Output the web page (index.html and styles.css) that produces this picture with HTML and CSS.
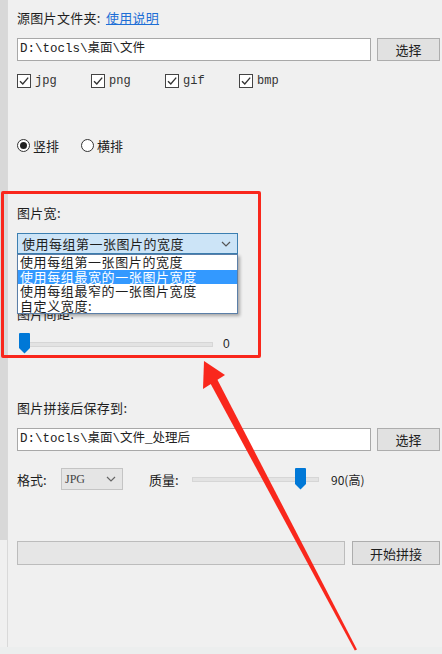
FILE: index.html
```html
<!DOCTYPE html>
<html lang="zh-CN">
<head>
    <meta charset="UTF-8">
    <title>图片拼接</title>
    <link rel="stylesheet" href="styles.css">
</head>
<body>
    <div class="window">
        <div class="scrollbar"><div class="scroll-thumb"></div></div>

        <div class="panel">
            <div class="label">源图片文件夹: <a href="#" class="link">使用说明</a></div>
            <div class="path-row">
                <div class="textbox">D:\tocls\桌面\文件</div>
                <button class="btn btn-select">选择</button>
            </div>

            <div class="check-row">
                <label class="check"><span class="box"><svg width="12" height="12" viewBox="0 0 12 12"><path d="M2 6.2 L4.8 9 L10.2 2.6" fill="none" stroke="#333" stroke-width="1.4"/></svg></span>jpg</label>
                <label class="check"><span class="box"><svg width="12" height="12" viewBox="0 0 12 12"><path d="M2 6.2 L4.8 9 L10.2 2.6" fill="none" stroke="#333" stroke-width="1.4"/></svg></span>png</label>
                <label class="check"><span class="box"><svg width="12" height="12" viewBox="0 0 12 12"><path d="M2 6.2 L4.8 9 L10.2 2.6" fill="none" stroke="#333" stroke-width="1.4"/></svg></span>gif</label>
                <label class="check"><span class="box"><svg width="12" height="12" viewBox="0 0 12 12"><path d="M2 6.2 L4.8 9 L10.2 2.6" fill="none" stroke="#333" stroke-width="1.4"/></svg></span>bmp</label>
            </div>

            <div class="radio-row">
                <label class="radio"><span class="dot on"></span>竖排</label>
                <label class="radio"><span class="dot"></span>横排</label>
            </div>

            <div class="label label-width">图片宽:</div>
            <div class="combo">
                <div class="combo-box">
                    <span>使用每组第一张图片的宽度</span>
                    <svg class="chevron" width="10" height="6" viewBox="0 0 10 6"><path d="M1 1 L5 5 L9 1" fill="none" stroke="#555" stroke-width="1.2"/></svg>
                </div>
                <ul class="combo-list">
                    <li>使用每组第一张图片的宽度</li>
                    <li class="selected">使用每组最宽的一张图片宽度</li>
                    <li>使用每组最窄的一张图片宽度</li>
                    <li>自定义宽度:</li>
                </ul>
            </div>

            <div class="label label-gap">图片间距:</div>
            <div class="slider-row">
                <div class="slider slider-gap">
                    <div class="track"></div>
                    <svg class="thumb thumb-start" width="11" height="21" viewBox="0 0 11 21"><path d="M1 0 H10 Q11 0 11 1 V15 L5.5 20.5 L0 15 V1 Q0 0 1 0 Z" fill="#0078d7"/></svg>
                </div>
                <span class="slider-value">0</span>
            </div>

            <div class="label label-save">图片拼接后保存到:</div>
            <div class="path-row">
                <div class="textbox">D:\tocls\桌面\文件_处理后</div>
                <button class="btn btn-select">选择</button>
            </div>

            <div class="format-row">
                <span class="format-label">格式:</span>
                <div class="format-select">
                    <span>JPG</span>
                    <svg width="10" height="6" viewBox="0 0 10 6"><path d="M1 1 L5 5 L9 1" fill="none" stroke="#666" stroke-width="1.2"/></svg>
                </div>
                <span class="quality-label">质量:</span>
                <div class="slider slider-quality">
                    <div class="track"></div>
                    <svg class="thumb thumb-quality" width="11" height="22" viewBox="0 0 11 22"><path d="M1 0 H10 Q11 0 11 1 V16 L5.5 21.5 L0 16 V1 Q0 0 1 0 Z" fill="#0078d7"/></svg>
                </div>
                <span class="quality-value">90(高)</span>
            </div>

            <div class="progress-row">
                <div class="progress"></div>
                <button class="btn btn-start">开始拼接</button>
            </div>
        </div>

        <!-- 标注: 红框和箭头 -->
        <div class="mark-box"></div>
        <svg class="mark-arrow" width="442" height="654" viewBox="0 0 442 654">
            <polygon points="216.5,378 357,649.5 354.8,650.5 209.5,381.8" fill="#f9271c"/>
            <polygon points="204,361 225,375 203,389" fill="#f9271c"/>
        </svg>
    </div>
    <div class="statusbar"></div>
</body>
</html>
```

FILE: styles.css
```css
html, body {
    margin: 0;
    padding: 0;
}
body {
    width: 442px;
    height: 654px;
    overflow: hidden;
    background: #f0f0f0;
    font-family: "Noto Sans CJK SC", "Liberation Sans", sans-serif;
    font-size: 13px;
    color: #1e1e1e;
}
.window {
    position: relative;
    display: flex;
    height: 647px;
}
.scrollbar {
    width: 7px;
    border-right: 1px solid #d9d9d9;
    flex-shrink: 0;
}
.scroll-thumb {
    height: 540px;
    background: #d8d8d8;
}
.panel {
    flex: 1;
    padding: 10px 2px 0 9px;
}
.label {
    height: 16px;
    line-height: 16px;
    letter-spacing: 0.3px;
}
.link {
    color: #1e6fd6;
    text-decoration: underline;
    margin-left: 2px;
}
.path-row {
    display: flex;
    gap: 6px;
    margin-top: 12px;
    height: 23px;
}
.textbox {
    flex: 1;
    background: #fff;
    border: 1px solid #a8a8a8;
    padding: 0 2px;
    line-height: 21px;
    font-family: "Liberation Mono", "Noto Sans CJK SC", monospace;
    font-size: 12.5px;
    color: #222;
}
.btn {
    background: #e1e1e1;
    border: 1px solid #adadad;
    font-family: "Noto Sans CJK SC", sans-serif;
    font-size: 13px;
    color: #1e1e1e;
    padding: 0;
}
.btn-select {
    width: 63px;
}
.check-row {
    display: flex;
    margin-top: 12px;
    height: 15px;
}
.check {
    display: flex;
    align-items: center;
    gap: 4px;
    width: 74px;
    font-family: "Liberation Mono", monospace;
    font-size: 12px;
    color: #333;
}
.box {
    width: 12px;
    height: 12px;
    border: 1px solid #444;
    background: #fff;
    display: flex;
}
.radio-row {
    display: flex;
    margin-top: 50px;
    height: 15px;
}
.radio {
    display: flex;
    align-items: center;
    gap: 3px;
    width: 64px;
}
.dot {
    width: 11px;
    height: 11px;
    border: 1px solid #333;
    border-radius: 50%;
    background: #fff;
    position: relative;
}
.dot.on::after {
    content: "";
    position: absolute;
    left: 2px;
    top: 2px;
    width: 7px;
    height: 7px;
    border-radius: 50%;
    background: #222;
}
.label-width {
    margin-top: 52px;
}
.combo {
    position: relative;
    width: 221px;
    margin-top: 12px;
}
.combo-box {
    height: 19px;
    background: #cce4f7;
    border: 1px solid #3c7fb1;
    display: flex;
    align-items: center;
    justify-content: space-between;
    padding: 0 6px 0 4px;
    letter-spacing: 0.5px;
}
.combo-list {
    position: absolute;
    top: 21px;
    left: 0;
    width: 219px;
    margin: 0;
    padding: 0;
    list-style: none;
    background: #fff;
    border: 1px solid #5b7fa8;
    box-shadow: 2px 2px 3px rgba(0, 0, 0, 0.3);
    z-index: 2;
}
.combo-list li {
    height: 14.5px;
    line-height: 14.5px;
    padding-left: 2px;
    font-size: 13px;
    letter-spacing: 0.6px;
    white-space: nowrap;
}
.combo-list li.selected {
    background: #3399ff;
    color: #fff;
}
.label-gap {
    margin-top: 52px;
}
.slider-row {
    display: flex;
    align-items: center;
    margin-top: 11px;
    height: 21px;
}
.slider {
    position: relative;
    height: 21px;
}
.track {
    position: absolute;
    left: 0;
    right: 0;
    top: 9px;
    height: 3px;
    background: #e3e3e3;
    border: 1px solid #d6d6d6;
}
.thumb {
    position: absolute;
    top: 0;
}
.slider-gap {
    width: 194px;
    margin-left: 2px;
}
.thumb-start {
    left: 0;
}
.slider-value {
    margin-left: 10px;
    font-family: "Liberation Sans", sans-serif;
    font-size: 12px;
}
.label-save {
    margin-top: 46px;
}
.format-row {
    display: flex;
    align-items: center;
    margin-top: 17px;
    height: 22px;
}
.format-label {
    width: 44px;
}
.format-select {
    width: 51px;
    height: 20px;
    background: #e5e5e5;
    border: 1px solid #c4c4c4;
    display: flex;
    align-items: center;
    justify-content: space-between;
    padding: 0 6px 0 3px;
    font-family: "Liberation Serif", serif;
    font-size: 12px;
    color: #444;
}
.quality-label {
    margin-left: 26px;
    width: 43px;
}
.slider-quality {
    width: 127px;
    height: 22px;
}
.thumb-quality {
    left: 103px;
}
.slider-quality .track {
    top: 9px;
}
.quality-value {
    margin-left: 12px;
    font-size: 12px;
}
.progress-row {
    display: flex;
    gap: 7px;
    margin-top: 51px;
    height: 24px;
}
.progress {
    flex: 1;
    background: #e6e6e6;
    border: 1px solid #bcbcbc;
}
.btn-start {
    width: 88px;
}
.mark-box {
    position: absolute;
    left: 1px;
    top: 191px;
    width: 260px;
    height: 167px;
    box-sizing: border-box;
    border: 3px solid #f9271c;
    border-radius: 2px;
    z-index: 3;
}
.mark-arrow {
    position: absolute;
    left: 0;
    top: 0;
    z-index: 3;
}
.statusbar {
    height: 7px;
    background: #eceeee;
}
```
